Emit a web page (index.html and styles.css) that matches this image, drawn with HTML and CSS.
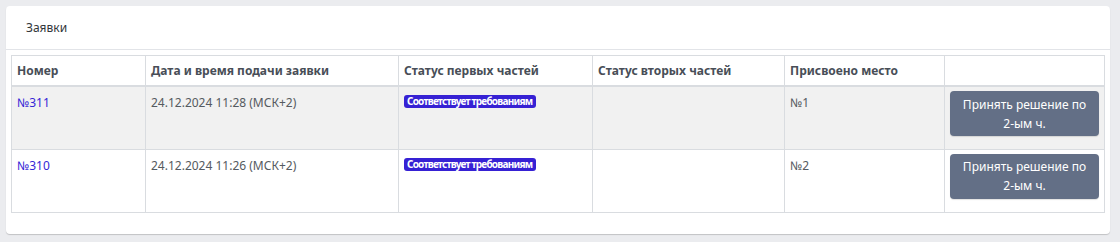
FILE: index.html
```html
<!DOCTYPE html>
<html lang="ru">
<head>
<meta charset="utf-8">
<link rel="stylesheet" href="styles.css">
</head>
<body>
<div class="card">
  <div class="card-header">Заявки</div>
  <div class="card-body">
    <table class="tbl">
      <colgroup>
        <col class="c1"><col class="c2"><col class="c3"><col class="c4"><col class="c5"><col class="c6">
      </colgroup>
      <thead>
        <tr>
          <th>Номер</th>
          <th>Дата и время подачи заявки</th>
          <th>Статус первых частей</th>
          <th>Статус вторых частей</th>
          <th>Присвоено место</th>
          <th></th>
        </tr>
      </thead>
      <tbody>
        <tr class="odd">
          <td><a class="link" href="#">№311</a></td>
          <td>24.12.2024 11:28 (МСК+2)</td>
          <td><span class="badge">Соответствует требованиям</span></td>
          <td></td>
          <td>№1</td>
          <td class="act"><button class="btn">Принять решение по 2-ым ч.</button></td>
        </tr>
        <tr>
          <td><a class="link" href="#">№310</a></td>
          <td>24.12.2024 11:26 (МСК+2)</td>
          <td><span class="badge">Соответствует требованиям</span></td>
          <td></td>
          <td>№2</td>
          <td class="act"><button class="btn">Принять решение по 2-ым ч.</button></td>
        </tr>
      </tbody>
    </table>
  </div>
</div>
</body>
</html>
```
FILE: styles.css
```css
html, body {
  margin: 0;
  padding: 0;
  background: #ebecef;
}
body {
  padding: 6px 10px 8px 6px;
  font-family: "Noto Sans", "Open Sans", sans-serif;
  font-size: 12px;
  color: #555a60;
}
.card {
  background: #fff;
  border-radius: 4px;
  box-shadow: 0 1px 1px rgba(0,0,0,0.18);
  height: 228px;
  box-sizing: border-box;
}
.card-header {
  height: 43px;
  line-height: 43px;
  padding-left: 20px;
  border-bottom: 1px solid #e2e4e8;
  color: #33373b;
  font-size: 12px;
}
.card-body {
  padding: 5px 5px 0 5px;
}
.tbl {
  width: 100%;
  border-collapse: collapse;
  table-layout: fixed;
}
.c1 { width: 134px; }
.c2 { width: 253px; }
.c3 { width: 194px; }
.c4 { width: 192px; }
.c5 { width: 160px; }
.tbl th, .tbl td {
  border: 1px solid #d9dce0;
  text-align: left;
  vertical-align: top;
}
.tbl th {
  height: 29px;
  padding: 0 5px;
  vertical-align: middle;
  font-weight: 700;
  font-size: 12px;
  color: #484e57;
  border-bottom-width: 2px;
}
.tbl td {
  height: 63px;
  padding: 7px 5px 0 5px;
  box-sizing: border-box;
}
.tbl tr.odd td {
  background: #f1f1f1;
}
.link {
  color: #3526d6;
  text-decoration: none;
}
.badge {
  display: inline-block;
  background: #3621d4;
  color: #fff;
  font-size: 10px;
  font-weight: 700;
  letter-spacing: -0.78px;
  line-height: 13px;
  padding: 0 4px 0 3px;
  border-radius: 3px;
  vertical-align: top;
  margin-top: 1px;
}
.tbl td.act {
  padding: 4px 5px 0 5px;
}
.btn {
  display: block;
  width: 100%;
  height: 45px;
  border: none;
  border-radius: 4px;
  background: #636f86;
  color: #fff;
  font-family: "Noto Sans", "Open Sans", sans-serif;
  font-size: 12px;
  line-height: 19px;
  padding: 2px 10px;
  box-shadow: 0 1px 1px rgba(0,0,0,0.12);
}
```
